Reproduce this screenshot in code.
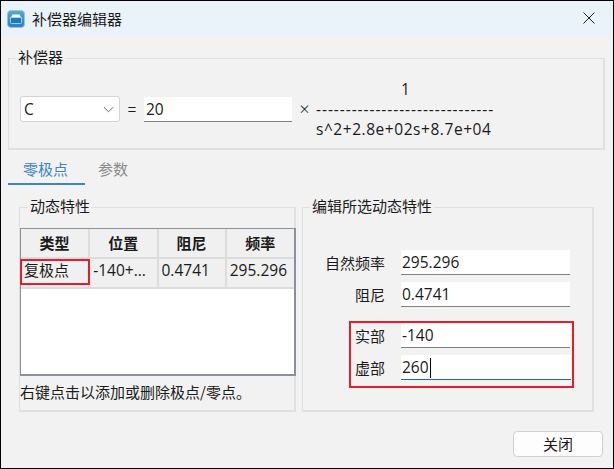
<div class="win">
  <header class="title">
    <svg class="logo" viewBox="0 0 18 18" width="18" height="18" aria-hidden="true">
      <defs><linearGradient id="lg" x1="0" y1="0" x2="0" y2="1"><stop offset="0" stop-color="#55a8dc"/><stop offset="1" stop-color="#2383c2"/></linearGradient></defs>
      <rect x="0.5" y="0.5" width="17" height="17" rx="3.5" fill="url(#lg)" stroke="#9cc0d6"/>
      <path d="M4 7.5 L5.5 4.5 H12.5 L14 7.5 Z" fill="#f7fafc"/>
      <path d="M3.5 7.5 H14.5 V12.5 Q14.5 13.5 13.5 13.5 H4.5 Q3.5 13.5 3.5 12.5 Z" fill="#1f7ab5" stroke="#d4e6f2" stroke-width="0.7"/>
    </svg>
    <span class="title-text">补偿器编辑器</span>
    <svg class="x" viewBox="0 0 12 12" width="12" height="12" aria-hidden="true"><path d="M0.5 0.5 L11.5 11.5 M11.5 0.5 L0.5 11.5" stroke="#222" stroke-width="1" fill="none"/></svg>
  </header>

  <fieldset class="group top">
    <legend>补偿器</legend>
    <div class="formula">
      <div class="combo"><span class="num">C</span>
        <svg viewBox="0 0 12 7" width="11" height="7" aria-hidden="true"><path d="M1 1 L6 6 L11 1" stroke="#555" fill="none"/></svg>
      </div>
      <span class="eq">=</span>
      <div class="input gain num">20</div>
      <span class="times">×</span>
      <div class="fraction num">
        <span class="one">1</span>
        <span class="dash">------------------------------</span>
        <span class="den">s^2+2.8e+02s+8.7e+04</span>
      </div>
    </div>
  </fieldset>

  <nav class="tabs">
    <span class="tab active">零极点</span>
    <span class="tab">参数</span>
  </nav>

  <div class="panels">
    <fieldset class="group left">
      <legend>动态特性</legend>
      <div class="tablebox">
        <table>
          <thead><tr><th>类型</th><th>位置</th><th>阻尼</th><th>频率</th></tr></thead>
          <tbody><tr><td class="type"><span>复极点</span><i class="mark"></i></td><td class="num">-140+...</td><td class="num">0.4741</td><td class="num">295.296</td></tr></tbody>
        </table>
      </div>
      <p class="note">右键点击以添加或删除极点/零点。</p>
    </fieldset>

    <fieldset class="group right">
      <legend>编辑所选动态特性</legend>
      <div class="fields">
        <label class="row"><span>自然频率</span><div class="input num">295.296</div></label>
        <label class="row"><span>阻尼</span><div class="input num">0.4741</div></label>
        <div class="marked">
          <label class="row"><span>实部</span><div class="input num">-140</div></label>
          <label class="row"><span>虚部</span><div class="input focus num">260<i class="caret"></i></div></label>
        </div>
      </div>
    </fieldset>
  </div>

  <footer class="foot"><button>关闭</button></footer>
</div>

<style>
  :global(body) { margin: 0; background: #f2f2f2; }
  .win {
    box-sizing: border-box; width: 614px; height: 469px; border: 1px solid #000;
    background: #f2f2f2; color: #1a1a1a; overflow: hidden;
    font: 15px/20px "Noto Sans CJK SC", sans-serif;
  }
  .num { font-family: "Open Sans", "Noto Sans CJK SC", sans-serif; font-size: 15.5px; }
  .title { display: flex; align-items: center; height: 35px; background: #ebf3fa; padding: 0 18px 0 6px; }
  .logo { margin-right: 7px; }
  .title-text { flex: 1; }
  .x { margin-top: -1px; }
  .group { margin: 0; padding: 0; border: 2px solid #e0e0e0; border-width: 1px 2px 2px 1px; box-sizing: border-box; min-width: 0; }
  legend { padding: 0 2px; margin-left: 7px; line-height: 20px; position: relative; top: -1px; }
  .top { margin: 12px 8px 0 7px; height: 102px; }
  .formula { display: flex; align-items: center; padding: 11px 0 0 11px; }
  .combo { box-sizing: border-box; width: 100px; height: 26px; display: flex; align-items: center; justify-content: space-between; padding: 0 5px 0 3px; background: #fff; border: 1px solid #d4d4d4; border-radius: 3px; }
  .eq { width: 24px; text-align: center; }
  .input { box-sizing: border-box; height: 25px; line-height: 24px; padding-left: 1px; background: #fff; border-bottom: 1px solid #808080; position: relative; }
  .gain { width: 148px; padding-left: 2px; }
  .times { width: 25px; text-align: center; font-size: 12px; }
  .fraction { display: flex; flex-direction: column; width: 184px; line-height: 20px; margin-left: -1px; }
  .fraction .one { text-align: left; padding-left: 85px; }
  .fraction .dash { white-space: nowrap; letter-spacing: 0.95px; }
  .fraction .den { letter-spacing: 0.55px; white-space: nowrap; }
  .tabs { display: flex; height: 35px; margin-left: 7px; align-items: flex-end; }
  .tab { box-sizing: border-box; height: 26px; color: #8a8a8a; padding-left: 13px; width: 77px; }
  .tab.active { color: #3d85c6; padding-left: 15px; border-bottom: 2px solid #3d85c6; }
  .panels { display: grid; grid-template-columns: 277px 292px; column-gap: 6px; margin: 12px 0 0 18px; height: 215px; }
  .left, .right { height: 215px; }
  .left legend { margin-left: 8px; }
  .tablebox { box-sizing: border-box; margin: 11px 0 0 0; height: 148px; background: #fff; border: 1px solid #8a9199; border-width: 1px 2px 2px 1px; width: 276px; }
  table { width: 100%; border-collapse: collapse; table-layout: fixed; }
  th, td { border-right: 2px solid #dcdcdc; border-bottom: 2px solid #dcdcdc; background: #f0f0f0; padding: 0; white-space: nowrap; }
  th:last-child, td:last-child { border-right: 0; }
  th { height: 28px; font-weight: 700; text-align: center; }
  td { height: 28px; padding: 0 0 6px 3px; position: relative; box-sizing: border-box; line-height: 22px; }
  .mark { position: absolute; left: -1px; top: 0; width: 66px; height: 22px; border: 2px solid #e81c2a; }
  .note { margin: 6px 0 0 0; }
  .fields { padding: 33px 0 0 0; }
  .row { display: grid; grid-template-columns: 82px 169px; column-gap: 16px; align-items: center; justify-content: start; text-align: right; margin-bottom: 7px; }
  .row .input { text-align: left; }
  .row > span { display: block; }
  .marked { box-sizing: border-box; margin: 14px 0 0 46px; width: 225px; height: 67px; border: 2px solid #e81c2a; }
  .marked .row { grid-template-columns: 34px 169px; margin-bottom: 7px; }
  .focus { border-bottom: 1px solid #1c66a8; width: 170px; }
  .caret { display: inline-block; width: 1px; height: 20px; background: #000; vertical-align: -5px; margin-left: 1px; }
  .foot { display: flex; justify-content: flex-end; padding: 19px 10px 0 0; }
  button { width: 90px; height: 26px; background: #fdfdfd; border: 1px solid #d0d0d0; border-radius: 4px; font: inherit; color: #1a1a1a; padding: 0; }
</style>
